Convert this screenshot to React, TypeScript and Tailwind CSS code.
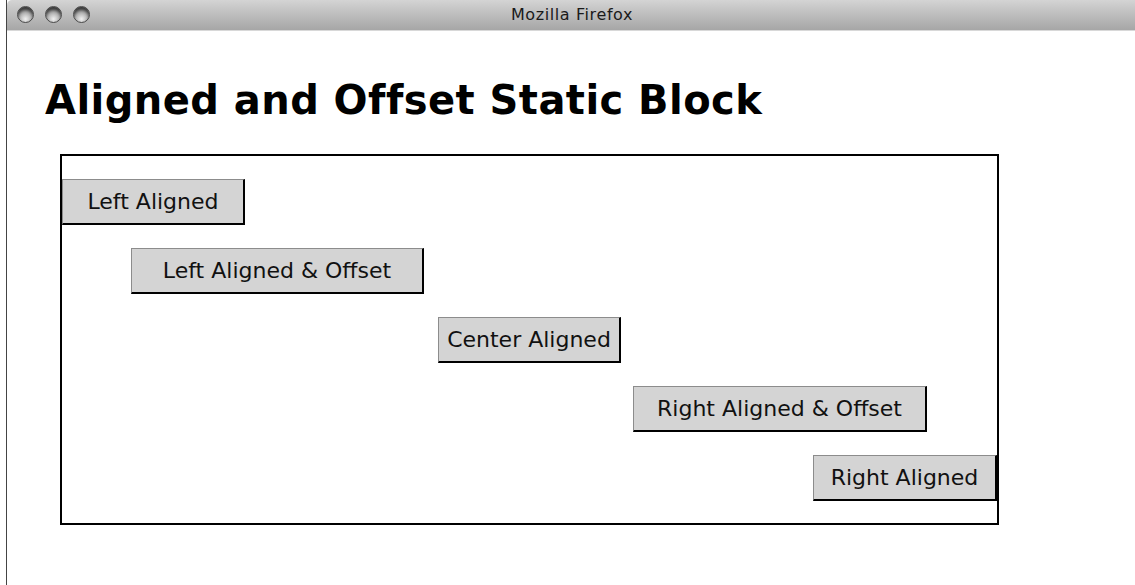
import React from 'react';

const buttons = [
  { label: 'Left Aligned', cls: 'self-start w-[183px]' },
  { label: 'Left Aligned & Offset', cls: 'self-start ml-[69px] w-[293px]' },
  { label: 'Center Aligned', cls: 'self-center w-[183px]' },
  { label: 'Right Aligned & Offset', cls: 'self-end mr-[70px] w-[294px]' },
  { label: 'Right Aligned', cls: 'self-end w-[184px]' },
];

const Light: React.FC = () => (
  <div className="w-[17px] h-[17px] rounded-full border border-[#4a4a4a] bg-[radial-gradient(circle_at_50%_80%,#f0f0f0_0%,#b0b0b0_45%,#505050_100%)] shadow-[inset_0_3px_3px_rgba(0,0,0,0.5)]" />
);

const App: React.FC = () => {
  return (
    <div className="w-[1135px] h-[585px] bg-white overflow-hidden flex">
      <div className="w-[6px] shrink-0 bg-white" />
      <div className="flex-1 flex flex-col border-l border-[#444]">
        <div className="h-[31px] shrink-0 relative flex items-center justify-center rounded-tl-[5px] bg-gradient-to-b from-[#d4d4d4] to-[#a6a6a6] border-b border-[#d8d8d8]">
          <div className="absolute left-[10px] top-[6px] flex gap-[11px]">
            <Light />
            <Light />
            <Light />
          </div>
          <span className="text-[16px] text-[#1a1a1a] tracking-[0.6px] font-['DejaVu_Sans',sans-serif] ml-[2px]">Mozilla Firefox</span>
        </div>
        <div className="flex-1 pl-[38px] pt-[45px] font-['DejaVu_Sans',Verdana,sans-serif]">
          <h1 className="text-[40px] font-bold leading-[48px] text-black tracking-[0.45px]">Aligned and Offset Static Block</h1>
          <div className="mt-[30px] ml-[15px] w-[939px] h-[371px] border-2 border-black flex flex-col gap-[23px] py-[23px]">
            {buttons.map((b) => (
              <div
                key={b.label}
                className={`${b.cls} h-[46px] shrink-0 flex items-center justify-center bg-[#d4d4d4] border-t border-l border-[#8c8c8c] border-b-2 border-r-2 border-b-black border-r-black text-[22px] text-[#111]`}
              >
                {b.label}
              </div>
            ))}
          </div>
        </div>
      </div>
    </div>
  );
};

export default App;
